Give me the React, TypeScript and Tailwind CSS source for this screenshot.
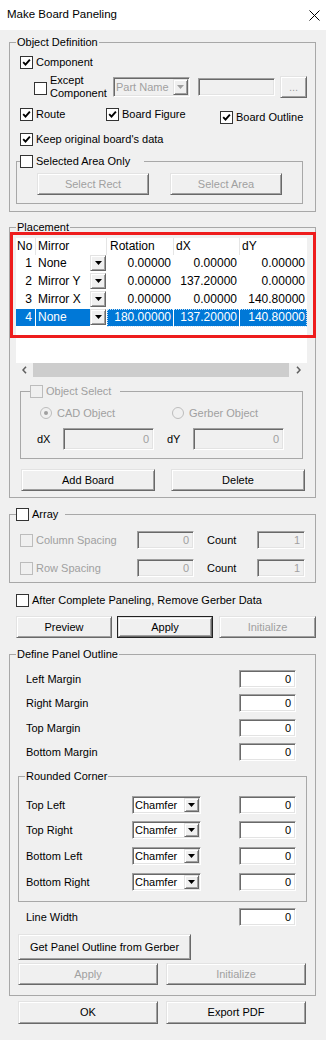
import React from 'react'

const sunken =
  'border border-t-[#a0a0a0] border-l-[#a0a0a0] border-r-white border-b-white shadow-[inset_1px_1px_0_#696969,inset_-1px_-1px_0_#e3e3e3]'
const raised =
  'border border-t-[#e3e3e3] border-l-[#e3e3e3] border-r-[#696969] border-b-[#696969] shadow-[inset_1px_1px_0_#ffffff,inset_-1px_-1px_0_#a0a0a0]'

function Tri({ disabled = false }: { disabled?: boolean }) {
  return (
    <svg width="7" height="4" viewBox="0 0 7 4">
      <path d="M0 0 H7 L3.5 4 Z" fill={disabled ? '#a0a0a0' : '#000'} />
    </svg>
  )
}

function Box({ checked = false, disabled = false }: { checked?: boolean; disabled?: boolean }) {
  return (
    <span
      className={`w-[13px] h-[13px] shrink-0 border flex items-center justify-center ${
        disabled ? 'border-[#bcbcbc] bg-[#f0f0f0]' : 'border-[#333333] bg-white'
      }`}
    >
      {checked && (
        <svg width="9" height="9" viewBox="0 0 9 9">
          <path d="M1.2 4.2 L3.5 6.6 L7.9 1.6" fill="none" stroke="#000" strokeWidth="1.9" />
        </svg>
      )}
    </span>
  )
}

function Check({
  label,
  checked = false,
  disabled = false,
  className = '',
}: {
  label: string
  checked?: boolean
  disabled?: boolean
  className?: string
}) {
  return (
    <div className={`flex items-center h-[13px] ${className}`}>
      <Box checked={checked} disabled={disabled} />
      <span className={`ml-[3px] leading-[13px] whitespace-nowrap ${disabled ? 'text-[#a0a0a0]' : ''}`}>{label}</span>
    </div>
  )
}

function Radio({ label, checked = false, className = '' }: { label: string; checked?: boolean; className?: string }) {
  return (
    <div className={`flex items-center h-[12px] ${className}`}>
      <svg width="12" height="12" viewBox="0 0 12 12">
        <circle cx="6" cy="6" r="5.5" fill="#f0f0f0" stroke="#bcbcbc" />
        {checked && <circle cx="6" cy="6" r="2" fill="#a0a0a0" />}
      </svg>
      <span className="ml-[5px] leading-[13px] text-[#a0a0a0] whitespace-nowrap">{label}</span>
    </div>
  )
}

function Field({ value = '0', disabled = false, className = '' }: { value?: string; disabled?: boolean; className?: string }) {
  return (
    <div
      className={`${sunken} flex items-center justify-end pr-[4px] ${
        disabled ? 'bg-[#f0f0f0] text-[#a0a0a0]' : 'bg-white'
      } ${className}`}
    >
      {value}
    </div>
  )
}

function Btn({
  label,
  disabled = false,
  isDefault = false,
  className = '',
}: {
  label: string
  disabled?: boolean
  isDefault?: boolean
  className?: string
}) {
  if (isDefault) {
    return (
      <div className={`border border-[#222] bg-[#f0f0f0] ${className}`}>
        <div className={`${raised} h-full flex items-center justify-center`}>{label}</div>
      </div>
    )
  }
  return (
    <div
      className={`${raised} bg-[#f0f0f0] flex items-center justify-center whitespace-nowrap ${
        disabled ? 'text-[#a0a0a0]' : ''
      } ${className}`}
    >
      {label}
    </div>
  )
}

function Combo({ value, disabled = false, className = '' }: { value: string; disabled?: boolean; className?: string }) {
  return (
    <div className={`${sunken} flex items-stretch ${disabled ? 'bg-[#f0f0f0] text-[#a0a0a0]' : 'bg-white'} ${className}`}>
      <span className="flex-1 flex items-center pl-[2px] whitespace-nowrap overflow-hidden">{value}</span>
      <span className={`${raised} bg-[#f0f0f0] w-[15px] shrink-0 my-[1px] mr-[1px] flex items-center justify-center`}>
        <Tri disabled={disabled} />
      </span>
    </div>
  )
}

const rows = [
  { no: 1, mirror: 'None', rot: '0.00000', dx: '0.00000', dy: '0.00000' },
  { no: 2, mirror: 'Mirror Y', rot: '0.00000', dx: '137.20000', dy: '0.00000' },
  { no: 3, mirror: 'Mirror X', rot: '0.00000', dx: '0.00000', dy: '140.80000' },
  { no: 4, mirror: 'None', rot: '180.00000', dx: '137.20000', dy: '140.80000', selected: true },
]

function PlacementGrid() {
  return (
    <div className="mt-[4px] ml-[6px] w-[291px] bg-white text-[12px]">
      <div className="flex h-[17px] leading-[17px]">
        <div className="w-[20px] pl-[1px] border-r border-[#e5e5e5]">No</div>
        <div className="w-[71px] pl-[2px] border-r border-[#e5e5e5]">Mirror</div>
        <div className="w-[67px] pl-[3px] border-r border-[#e5e5e5]">Rotation</div>
        <div className="w-[66px] pl-[2px] border-r border-[#e5e5e5]">dX</div>
        <div className="w-[67px] pl-[2px]">dY</div>
      </div>
      {rows.map((r) => {
        const sel = r.selected ? 'bg-[#0078d7] text-white' : ''
        return (
          <div key={r.no} className="flex h-[18px] leading-[17px]">
            <div className={`w-[20px] text-right pr-[3px] border-r border-b border-white ${sel}`}>{r.no}</div>
            <div className="w-[71px] flex border-r border-b border-white">
              <span className={`flex-1 pl-[2px] ${sel}`}>{r.mirror}</span>
              <span className={`${raised} bg-[#f0f0f0] w-[16px] h-[16px] flex items-center justify-center`}>
                <Tri />
              </span>
            </div>
            <div className={`flex ${r.selected ? 'outline-1 outline-dotted outline-[#cfe4f7] -outline-offset-1' : ''}`}>
              <div className={`w-[67px] text-right pr-[2px] border-r border-b border-white ${sel}`}>{r.rot}</div>
              <div className={`w-[66px] text-right pr-[2px] border-r border-b border-white ${sel}`}>{r.dx}</div>
              <div className={`w-[67px] text-right pr-[2px] border-b border-white ${sel}`}>{r.dy}</div>
            </div>
          </div>
        )
      })}
      <div className="h-[36px]" />
      <div className="h-[14px] flex bg-[#f0f0f0]">
        <div className="w-[17px] flex items-center justify-center">
          <svg width="5" height="8" viewBox="0 0 5 8">
            <path d="M4 0.8 L1 4 L4 7.2" fill="none" stroke="#606060" strokeWidth="1.6" />
          </svg>
        </div>
        <div className="flex-1 bg-[#cdcdcd]" />
        <div className="w-[18px] flex items-center justify-center">
          <svg width="5" height="8" viewBox="0 0 5 8">
            <path d="M1 0.8 L4 4 L1 7.2" fill="none" stroke="#606060" strokeWidth="1.6" />
          </svg>
        </div>
      </div>
    </div>
  )
}

function Legend({ children }: { children: React.ReactNode }) {
  return <legend className="ml-[6px] px-[1px] leading-[13px]">{children}</legend>
}

export default function App() {
  return (
    <div className="relative w-[326px] h-[1040px] overflow-hidden bg-[#f0f0f0] text-[11px] text-black font-['Liberation_Sans',Arial,sans-serif]">
      {/* title bar */}
      <div className="h-[30px] bg-white flex items-center justify-between pl-[7px] pr-[6px]">
        <span className="text-[11.5px]">Make Board Paneling</span>
        <svg width="11" height="11" viewBox="0 0 11 11">
          <path d="M0.5 0.5 L10.5 10.5 M10.5 0.5 L0.5 10.5" stroke="#000" strokeWidth="1" />
        </svg>
      </div>

      {/* Object Definition */}
      <fieldset className="ml-[9px] mt-[6px] w-[307px] border border-[#a8a8a8] pb-[7px]">
        <Legend>Object Definition</Legend>
        <Check className="ml-[10px] mt-[7px]" checked label="Component" />
        <div className="flex items-center h-[22px] mt-[7px]">
          <span className="ml-[24px] mt-[3px]">
            <Box />
          </span>
          <div className="ml-[3px] w-[63px] leading-[13px]">
            Except
            <br />
            Component
          </div>
          <Combo value="Part Name" disabled className="w-[77px] h-[20px] text-[11px]" />
          <Field value="" disabled className="ml-[8px] w-[77px] h-[18px]" />
          <Btn label="..." disabled className="ml-[5px] w-[27px] h-[22px]" />
        </div>
        <div className="flex items-start mt-[10px]">
          <Check className="ml-[10px] w-[86px]" checked label="Route" />
          <Check className="w-[114px]" checked label="Board Figure" />
          <Check className="mt-[3px]" checked label="Board Outline" />
        </div>
        <Check className="ml-[10px] mt-[9px]" checked label="Keep original board's data" />
        <fieldset className="ml-[6px] mt-[9px] w-[287px] border border-[#a8a8a8] pb-[8px]">
          <legend className="ml-[3px] pr-[14px]">
            <Check label="Selected Area Only" />
          </legend>
          <div className="flex mt-[5px] ml-[20px] gap-[21px]">
            <Btn label="Select Rect" disabled className="w-[112px] h-[22px]" />
            <Btn label="Select Area" disabled className="w-[112px] h-[22px]" />
          </div>
        </fieldset>
      </fieldset>

      {/* Placement */}
      <fieldset className="ml-[9px] mt-[9px] w-[307px] border border-[#a8a8a8] pb-[6px]">
        <Legend>Placement</Legend>
        <PlacementGrid />
        <fieldset className="ml-[10px] mt-[8px] w-[283px] border border-[#a8a8a8] pb-[8px]">
          <legend className="ml-[9px] pr-[9px]">
            <Check label="Object Select" disabled />
          </legend>
          <div className="flex mt-[9px]">
            <Radio className="ml-[19px] w-[132px]" checked label="CAD Object" />
            <Radio label="Gerber Object" />
          </div>
          <div className="flex items-center h-[22px] mt-[9px]">
            <span className="ml-[16px] w-[26px]">dX</span>
            <Field disabled className="w-[91px] h-[22px]" />
            <span className="ml-[13px] w-[26px]">dY</span>
            <Field disabled className="w-[91px] h-[22px]" />
          </div>
        </fieldset>
        <div className="flex mt-[10px] ml-[11px] gap-[16px]">
          <Btn label="Add Board" className="w-[134px] h-[22px]" />
          <Btn label="Delete" className="w-[134px] h-[22px]" />
        </div>
      </fieldset>

      {/* Array */}
      <fieldset className="ml-[9px] mt-[10px] w-[307px] border border-[#a8a8a8] pb-[5px]">
        <legend className="ml-[6px] pr-[7px]">
          <Check label="Array" />
        </legend>
        <div className="flex items-center h-[18px] mt-[10px]">
          <Check className="ml-[10px] w-[117px]" disabled label="Column Spacing" />
          <Field disabled className="w-[57px] h-[18px]" />
          <span className="ml-[13px] w-[50px]">Count</span>
          <Field value="1" disabled className="w-[48px] h-[18px]" />
        </div>
        <div className="flex items-center h-[18px] mt-[10px]">
          <Check className="ml-[10px] w-[117px]" disabled label="Row Spacing" />
          <Field disabled className="w-[57px] h-[18px]" />
          <span className="ml-[13px] w-[50px]">Count</span>
          <Field value="1" disabled className="w-[48px] h-[18px]" />
        </div>
      </fieldset>

      <Check className="ml-[16px] mt-[11px]" label="After Complete Paneling, Remove Gerber Data" />

      <div className="flex mt-[9px] ml-[16px]">
        <Btn label="Preview" className="w-[96px] h-[22px]" />
        <Btn label="Apply" isDefault className="ml-[5px] w-[96px] h-[22px]" />
        <Btn label="Initialize" disabled className="ml-[6px] w-[97px] h-[22px]" />
      </div>

      {/* Define Panel Outline */}
      <fieldset className="ml-[9px] mt-[10px] w-[307px] border border-[#a8a8a8] pb-[10px]">
        <Legend>Define Panel Outline</Legend>
        {[
          ['Left Margin', 'mt-[9px]'],
          ['Right Margin', 'mt-[6px]'],
          ['Top Margin', 'mt-[7px]'],
          ['Bottom Margin', 'mt-[6px]'],
        ].map(([label, mt]) => (
          <div key={label} className={`flex items-center h-[18px] ${mt}`}>
            <span className="pl-[16px] w-[229px]">{label}</span>
            <Field className="w-[57px] h-[18px]" />
          </div>
        ))}

        <fieldset className="ml-[8px] mt-[9px] w-[289px] border border-[#a8a8a8] pb-[10px]">
          <Legend>Rounded Corner</Legend>
          {[
            ['Top Left', 'mt-[13px]'],
            ['Top Right', 'mt-[7px]'],
            ['Bottom Left', 'mt-[8px]'],
            ['Bottom Right', 'mt-[8px]'],
          ].map(([label, mt]) => (
            <div key={label} className={`flex items-center h-[18px] ${mt}`}>
              <span className="pl-[7px] w-[113px]">{label}</span>
              <Combo value="Chamfer" className="w-[69px] h-[18px]" />
              <Field className="ml-[38px] w-[57px] h-[18px]" />
            </div>
          ))}
        </fieldset>

        <div className="flex items-center h-[18px] mt-[6px]">
          <span className="pl-[16px] w-[229px]">Line Width</span>
          <Field className="w-[57px] h-[18px]" />
        </div>
        <Btn label="Get Panel Outline from Gerber" className="ml-[8px] mt-[8px] w-[173px] h-[26px]" />
        <div className="flex mt-[3px] ml-[8px] gap-[8px]">
          <Btn label="Apply" disabled className="w-[140px] h-[22px]" />
          <Btn label="Initialize" disabled className="w-[140px] h-[22px]" />
        </div>
      </fieldset>

      <div className="flex mt-[5px] ml-[18px] gap-[8px]">
        <Btn label="OK" className="w-[140px] h-[23px]" />
        <Btn label="Export PDF" className="w-[140px] h-[23px]" />
      </div>

      {/* highlight annotation over the placement grid */}
      <div className="absolute left-[10px] top-[232px] w-[306px] h-[106px] border-[3px] border-[#ee1c1c] pointer-events-none" />
    </div>
  )
}
